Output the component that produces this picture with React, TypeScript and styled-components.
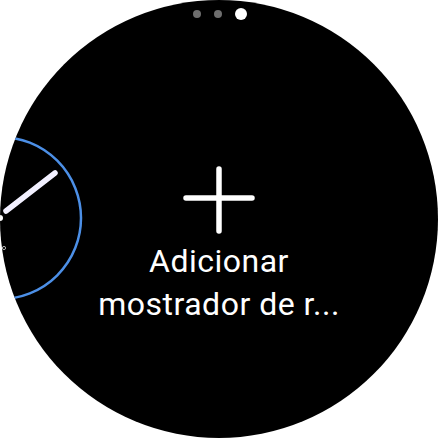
import React from 'react';
import styled, { createGlobalStyle } from 'styled-components';

const Global = createGlobalStyle`
  html, body {
    margin: 0;
    padding: 0;
    background: #fff;
  }
  #root {
    width: 438px;
    height: 438px;
  }
`;

const Watch = styled.div`
  position: relative;
  width: 438px;
  height: 438px;
  border-radius: 50%;
  background: #000;
  overflow: hidden;
  display: flex;
  align-items: center;
  justify-content: center;
  font-family: 'Roboto', 'Noto Sans', sans-serif;
  color: #fff;
`;

const Pager = styled.div`
  position: absolute;
  top: 8px;
  left: 0;
  right: 0;
  display: flex;
  justify-content: center;
  align-items: center;
  gap: 13px;
  padding-left: 2px;
`;

const Dot = styled.span<{ $active?: boolean }>`
  width: ${({ $active }) => ($active ? 12 : 8)}px;
  height: ${({ $active }) => ($active ? 12 : 8)}px;
  border-radius: 50%;
  background: ${({ $active }) => ($active ? '#fff' : '#6e6e6e')};
`;

const Peek = styled.svg`
  position: absolute;
  left: -84px;
  top: 134px;
  width: 168px;
  height: 168px;
`;

const AddTile = styled.button`
  display: flex;
  flex-direction: column;
  align-items: center;
  gap: 3px;
  margin-top: 53px;
  padding: 0;
  border: 0;
  background: none;
  color: inherit;
  font: inherit;
`;

const PlusIcon = styled.svg`
  width: 72px;
  height: 72px;
`;

const Label = styled.div`
  font-size: 32px;
  line-height: 43px;
  letter-spacing: 0.5px;
  text-align: center;
`;

export default function App() {
  return (
    <>
      <Global />
      <Watch>
        <Pager>
          <Dot />
          <Dot />
          <Dot $active />
        </Pager>
        <Peek viewBox="0 0 168 168">
          <circle cx="84" cy="84" r="81" fill="none" stroke="#4c8fe6" strokeWidth="2.5" />
          <line x1="90" y1="77" x2="139" y2="39" stroke="#f2f0ff" strokeWidth="5.5" strokeLinecap="round" />
          <circle cx="84" cy="84" r="3" fill="#fff" />
          <circle cx="88" cy="114" r="1.6" fill="none" stroke="#fff" strokeWidth="0.7" />
        </Peek>
        <AddTile>
          <PlusIcon viewBox="0 0 72 72">
            <path d="M36 4 V66 M3 33 H69" stroke="#fff" strokeWidth="5.5" strokeLinecap="round" fill="none" />
          </PlusIcon>
          <Label>
            Adicionar
            <br />
            mostrador de r...
          </Label>
        </AddTile>
      </Watch>
    </>
  );
}
